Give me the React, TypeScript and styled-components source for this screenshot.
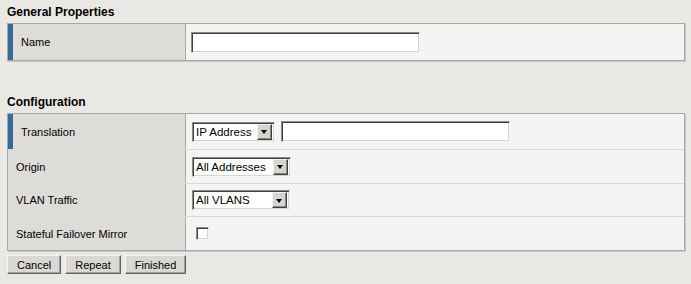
import React from "react";
import styled, { createGlobalStyle } from "styled-components";

const Global = createGlobalStyle`
  html, body { margin: 0; padding: 0; background: #e9e8e4; }
  body {
    font-family: "Liberation Sans", Arial, sans-serif;
    font-size: 11px;
    color: #000;
  }
`;

const Page = styled.div`
  padding: 5px 6px 0 7px;
  width: 678px;
`;

const SectionTitle = styled.div<{ $first?: boolean }>`
  font-weight: bold;
  font-size: 12px;
  line-height: 14px;
  margin-top: ${(p) => (p.$first ? "0" : "34px")};
  margin-bottom: 4px;
`;

const Table = styled.div`
  border: 1px solid #a8a8a8;
  box-shadow: 1px 1px 0 #c9c9c9;
  background: #f5f4f2;
`;

const Row = styled.div<{ $h?: number; $first?: boolean }>`
  display: grid;
  grid-template-columns: 178px 1fr;
  min-height: ${(p) => p.$h ?? 33}px;
  border-top: ${(p) => (p.$first ? "none" : "1px solid #d9d8d5")};
`;

const LabelCell = styled.div<{ $marked?: boolean }>`
  display: flex;
  align-items: center;
  background: #dddcd8;
  border-right: 1px solid #a9a9a9;
  border-left: ${(p) => (p.$marked ? "5px solid #36699c" : "none")};
  padding-left: 8px;
`;

const ValueCell = styled.div`
  display: flex;
  align-items: center;
  gap: 6px;
  padding-left: 5px;
  background: #f5f4f2;
`;

const sunken = `
  border: 1px solid;
  border-color: #8a8a8a #f4f4f4 #f4f4f4 #8a8a8a;
  box-shadow: inset 1px 1px 0 #404040, inset -1px -1px 0 #d6d4d0;
`;

const TextField = styled.input<{ $w: number }>`
  ${sunken}
  box-sizing: border-box;
  width: ${(p) => p.$w}px;
  height: 21px;
  background: #fff;
  padding: 0 3px;
  font: inherit;
  outline: none;
`;

const Select = styled.div<{ $w: number }>`
  ${sunken}
  box-sizing: border-box;
  display: inline-flex;
  align-items: center;
  width: ${(p) => p.$w}px;
  height: 20px;
  padding: 2px 2px 2px 3px;
  background: #fff;
  margin-left: 1px;
  font-size: 11.5px;
`;

const SelectText = styled.span`
  flex: 1;
  white-space: nowrap;
  overflow: hidden;
`;

const DropButton = styled.span`
  box-sizing: border-box;
  width: 15px;
  height: 16px;
  background: #d6d4d0;
  border: 1px solid;
  border-color: #f4f4f4 #404040 #404040 #f4f4f4;
  box-shadow: inset -1px -1px 0 #888;
  display: flex;
  align-items: center;
  justify-content: center;
  &::after {
    content: "";
    width: 0;
    height: 0;
    border-left: 3.5px solid transparent;
    border-right: 3.5px solid transparent;
    border-top: 4px solid #000;
    margin: 1px 1px 0 0;
  }
`;

const Checkbox = styled.span`
  ${sunken}
  box-sizing: border-box;
  display: inline-block;
  width: 13px;
  height: 13px;
  background: #fff;
  margin-left: 5px;
`;

const ButtonBar = styled.div`
  display: flex;
  gap: 4px;
  margin-top: 4px;
`;

const Button = styled.button`
  box-sizing: border-box;
  height: 19px;
  padding: 0 9px;
  font-family: "Liberation Sans", Arial, sans-serif;
  font-size: 11px;
  color: #000;
  background: #d9d8d4;
  border: 1px solid;
  border-color: #f6f6f6 #606060 #606060 #f6f6f6;
  box-shadow: inset -1px -1px 0 #a0a0a0;
  cursor: pointer;
`;

function Dropdown({ value, width }: { value: string; width: number }) {
  return (
    <Select $w={width}>
      <SelectText>{value}</SelectText>
      <DropButton />
    </Select>
  );
}

export default function App() {
  return (
    <>
      <Global />
      <Page>
        <SectionTitle $first>General Properties</SectionTitle>
        <Table>
          <Row $h={36} $first>
            <LabelCell $marked>Name</LabelCell>
            <ValueCell>
              <TextField $w={229} />
            </ValueCell>
          </Row>
        </Table>

        <SectionTitle>Configuration</SectionTitle>
        <Table>
          <Row $h={35} $first>
            <LabelCell $marked>Translation</LabelCell>
            <ValueCell>
              <Dropdown value="IP Address" width={83} />
              <TextField $w={229} />
            </ValueCell>
          </Row>
          <Row>
            <LabelCell>Origin</LabelCell>
            <ValueCell>
              <Dropdown value="All Addresses" width={99} />
            </ValueCell>
          </Row>
          <Row $h={32}>
            <LabelCell>VLAN Traffic</LabelCell>
            <ValueCell>
              <Dropdown value="All VLANS" width={98} />
            </ValueCell>
          </Row>
          <Row>
            <LabelCell>Stateful Failover Mirror</LabelCell>
            <ValueCell>
              <Checkbox />
            </ValueCell>
          </Row>
        </Table>

        <ButtonBar>
          <Button>Cancel</Button>
          <Button>Repeat</Button>
          <Button>Finished</Button>
        </ButtonBar>
      </Page>
    </>
  );
}
